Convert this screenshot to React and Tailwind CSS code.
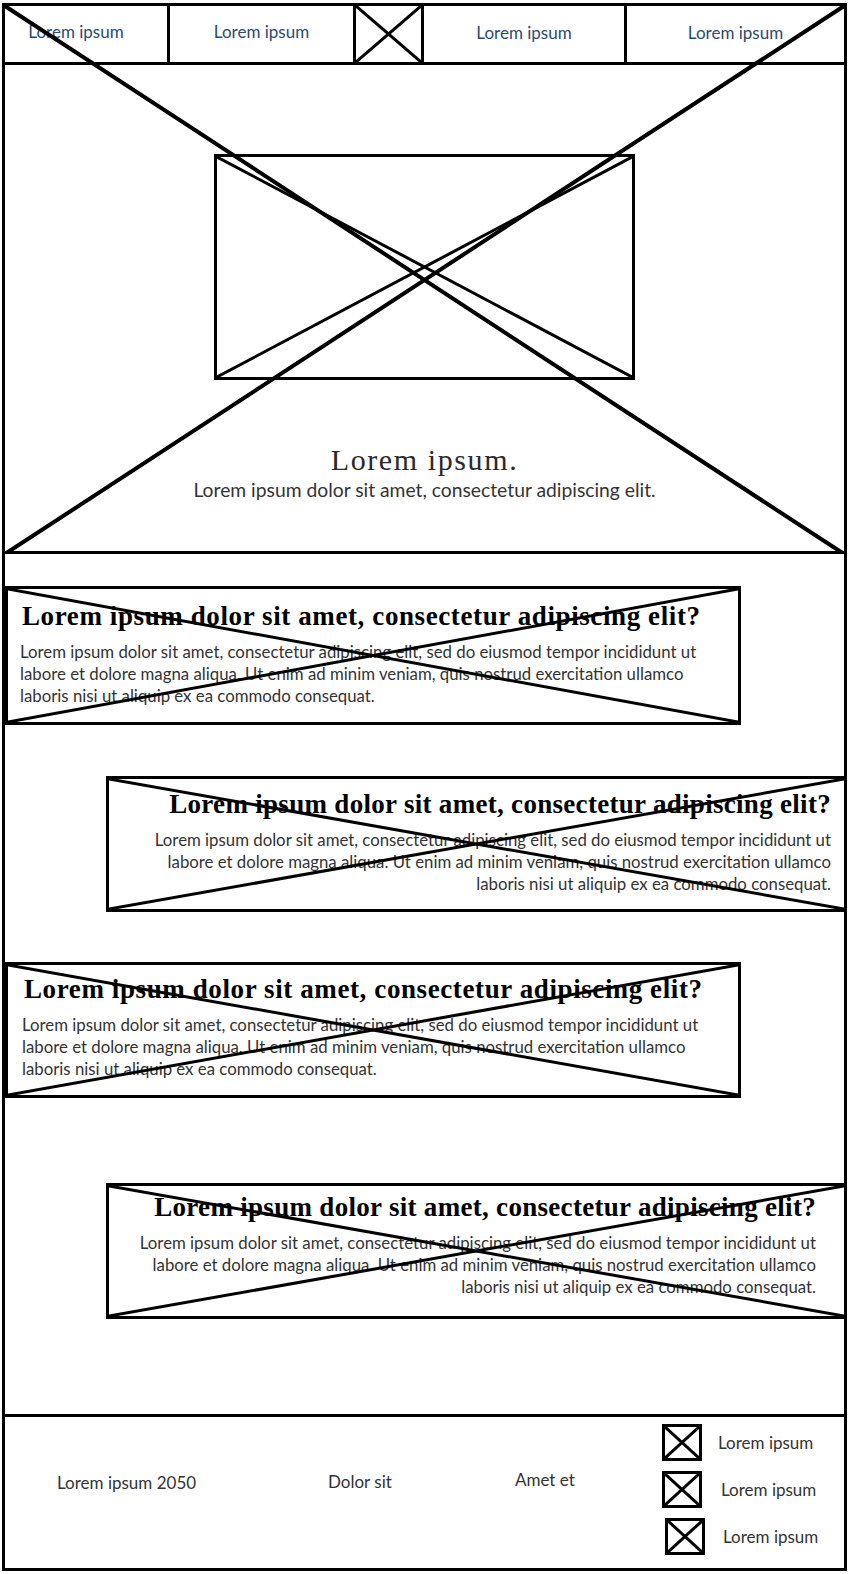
import React from 'react';

const body = [
  'Lorem ipsum dolor sit amet, consectetur adipiscing elit, sed do eiusmod tempor incididunt ut',
  'labore et dolore magna aliqua. Ut enim ad minim veniam, quis nostrud exercitation ullamco',
  'laboris nisi ut aliquip ex ea commodo consequat.',
];

function Cross({ w = 3 }) {
  return (
    <svg
      className="pointer-events-none absolute inset-0 h-full w-full"
      viewBox="0 0 100 100"
      preserveAspectRatio="none"
    >
      <line x1="0" y1="0" x2="100" y2="100" stroke="black" strokeWidth={w} vectorEffect="non-scaling-stroke" />
      <line x1="100" y1="0" x2="0" y2="100" stroke="black" strokeWidth={w} vectorEffect="non-scaling-stroke" />
    </svg>
  );
}

function Card({ right, className, pad }) {
  return (
    <div className={'relative border-[3px] border-black ' + className}>
      <div className={pad}>
        <h2
          className={
            "font-['Liberation_Serif',serif] text-[27px] leading-[34px] font-bold text-black whitespace-nowrap " +
            (right ? 'text-right tracking-[0.3px]' : 'ml-[2px] tracking-[0.6px]')
          }
        >
          Lorem ipsum dolor sit amet, consectetur adipiscing elit?
        </h2>
        <p className={'mt-[8px] text-[16.8px] leading-[22px] text-[#333] whitespace-nowrap ' + (right ? 'text-right' : '')}>
          {body[0]}
          <br />
          {body[1]}
          <br />
          {body[2]}
        </p>
      </div>
      <Cross w={3} />
    </div>
  );
}

function IconBox({ className }) {
  return (
    <div className={'relative h-[37px] w-[40px] shrink-0 border-[3px] border-black ' + className}>
      <Cross w={3} />
    </div>
  );
}

export default function App() {
  const navText = 'text-[17px] text-[#2b4b6f]';
  return (
    <div className="min-h-[1574px] bg-white pt-[3px] font-['Lato',sans-serif]">
      <div className="ml-[2px] w-[845px] border-[3px] border-black">
        {/* nav + hero, crossed out as one block */}
        <div className="relative">
          <nav className="flex h-[59px] border-b-[3px] border-black">
            <div className={'flex w-[165px] items-center justify-center border-r-[3px] border-black pr-[20px] pb-[5px] ' + navText}>
              Lorem ipsum
            </div>
            <div className={'flex w-[186px] items-center justify-center border-r-[3px] border-black pb-[5px] ' + navText}>
              Lorem ipsum
            </div>
            <div className="relative w-[68px] border-r-[3px] border-black">
              <Cross w={3} />
            </div>
            <div className={'flex w-[203px] items-center justify-center border-r-[3px] border-black pb-[3px] ' + navText}>
              Lorem ipsum
            </div>
            <div className={'flex flex-1 items-center justify-center pb-[3px] ' + navText}>Lorem ipsum</div>
          </nav>
          <section className="flex h-[489px] flex-col border-b-[3px] border-black pt-[89px]">
            <div className="relative mx-auto h-[226px] w-[421px] border-[3px] border-black">
              <Cross w={3} />
            </div>
            <h1 className="mt-[62px] text-center font-['Liberation_Serif',serif] text-[30px] leading-[36px] tracking-[1.6px] text-[#2a2a2a]">
              Lorem ipsum.
            </h1>
            <p className="text-center text-[19.3px] leading-[24px] text-[#333]">
              Lorem ipsum dolor sit amet, consectetur adipiscing elit.
            </p>
          </section>
          <Cross w={4} />
        </div>

        {/* alternating cards */}
        <div className="flex flex-col pb-[95px]">
          <Card className="mt-[32px] h-[139px] w-[736px]" pad="pl-[12px] pt-[10px]" />
          <Card right className="ml-[101px] mt-[51px] h-[136px] w-[741px]" pad="pr-[13px] pt-[8px]" />
          <Card className="mt-[50px] h-[136px] w-[736px]" pad="pl-[14px] pt-[7px]" />
          <Card right className="ml-[101px] mt-[85px] h-[136px] w-[741px]" pad="pr-[28px] pt-[4px]" />
        </div>

        {/* footer */}
        <footer className="flex h-[154px] border-t-[3px] border-black text-[#333]">
          <div className="ml-[52px] mt-[54px] w-[271px] text-[17px] leading-[24px]">Lorem ipsum 2050</div>
          <div className="mt-[53px] w-[187px] text-[17px] leading-[24px]">Dolor sit</div>
          <div className="mt-[51px] w-[147px] text-[17px] leading-[24px]">Amet et</div>
          <div className="mt-[7px] flex flex-col gap-[10px]">
            <div className="flex items-center gap-[16px]">
              <IconBox />
              <span className="text-[17px]">Lorem ipsum</span>
            </div>
            <div className="flex items-center gap-[19px]">
              <IconBox />
              <span className="text-[17px]">Lorem ipsum</span>
            </div>
            <div className="flex items-center gap-[18px] pl-[3px]">
              <IconBox className="h-[36px] w-[38px]" />
              <span className="text-[17px]">Lorem ipsum</span>
            </div>
          </div>
        </footer>
      </div>
    </div>
  );
}
